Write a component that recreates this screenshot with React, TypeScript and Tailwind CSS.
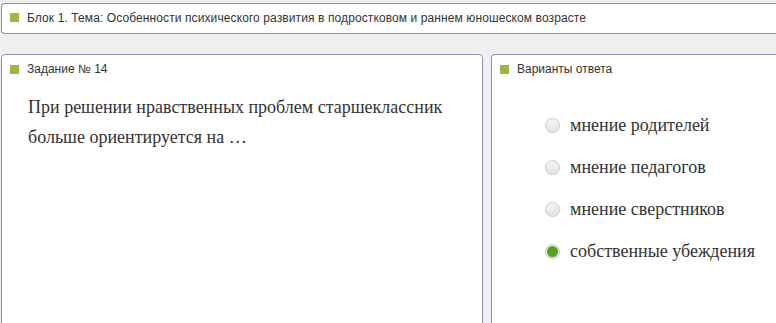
const options = [
  { label: "мнение родителей", checked: false },
  { label: "мнение педагогов", checked: false },
  { label: "мнение сверстников", checked: false },
  { label: "собственные убеждения", checked: true },
];

function Marker() {
  return <span className="w-[9px] h-[9px] bg-[#9fb83c] shrink-0" />;
}

function Radio({ checked }: { checked: boolean }) {
  return (
    <span className="w-[15px] h-[15px] rounded-full border border-[#c8c8c8] bg-gradient-to-b from-[#f4f4f4] to-[#e2e2e2] grid place-items-center shrink-0">
      {checked && <span className="w-[11px] h-[11px] rounded-full bg-[#4ea51c]" />}
    </span>
  );
}

export default function App() {
  return (
    <div className="w-[776px] h-[323px] overflow-hidden bg-[#efefef] pl-[1px] pt-[3px] font-['Liberation_Sans',Arial,sans-serif]">
      <div className="h-[31px] bg-white border border-r-0 border-[#8e8db4] rounded-l-[4px] flex items-center gap-[8px] pl-[8px] pb-[2px]">
        <Marker />
        <span className="text-[12px] tracking-[0.1px] text-[#333]">
          Блок 1. Тема: Особенности психического развития в подростковом и раннем юношеском возрасте
        </span>
      </div>

      <div className="flex gap-[8px] mt-[20px]">
        <div className="w-[482px] h-[300px] shrink-0 bg-white border border-[#8e8db4] rounded-t-[4px]">
          <div className="flex items-center gap-[8px] pl-[8px] pt-[5px]">
            <Marker />
            <span className="text-[12px] text-[#333]">Задание № 14</span>
          </div>
          <p className="mt-[14px] pl-[26px] pr-[20px] font-['Liberation_Serif','Times_New_Roman',serif] text-[18px] leading-[30px] text-[#333]">
            При решении нравственных проблем старшеклассник больше ориентируется на …
          </p>
        </div>

        <div className="flex-1 h-[300px] bg-white border border-r-0 border-[#8e8db4] rounded-tl-[4px]">
          <div className="flex items-center gap-[8px] pl-[8px] pt-[5px]">
            <Marker />
            <span className="text-[12px] text-[#333]">Варианты ответа</span>
          </div>
          <div className="flex flex-col gap-[20px] pl-[53px] pt-[36px]">
            {options.map((o) => (
              <label key={o.label} className="flex items-center gap-[10px] h-[22px]">
                <Radio checked={o.checked} />
                <span className="font-['Liberation_Serif','Times_New_Roman',serif] text-[18px] text-[#333]">
                  {o.label}
                </span>
              </label>
            ))}
          </div>
        </div>
      </div>
    </div>
  );
}
